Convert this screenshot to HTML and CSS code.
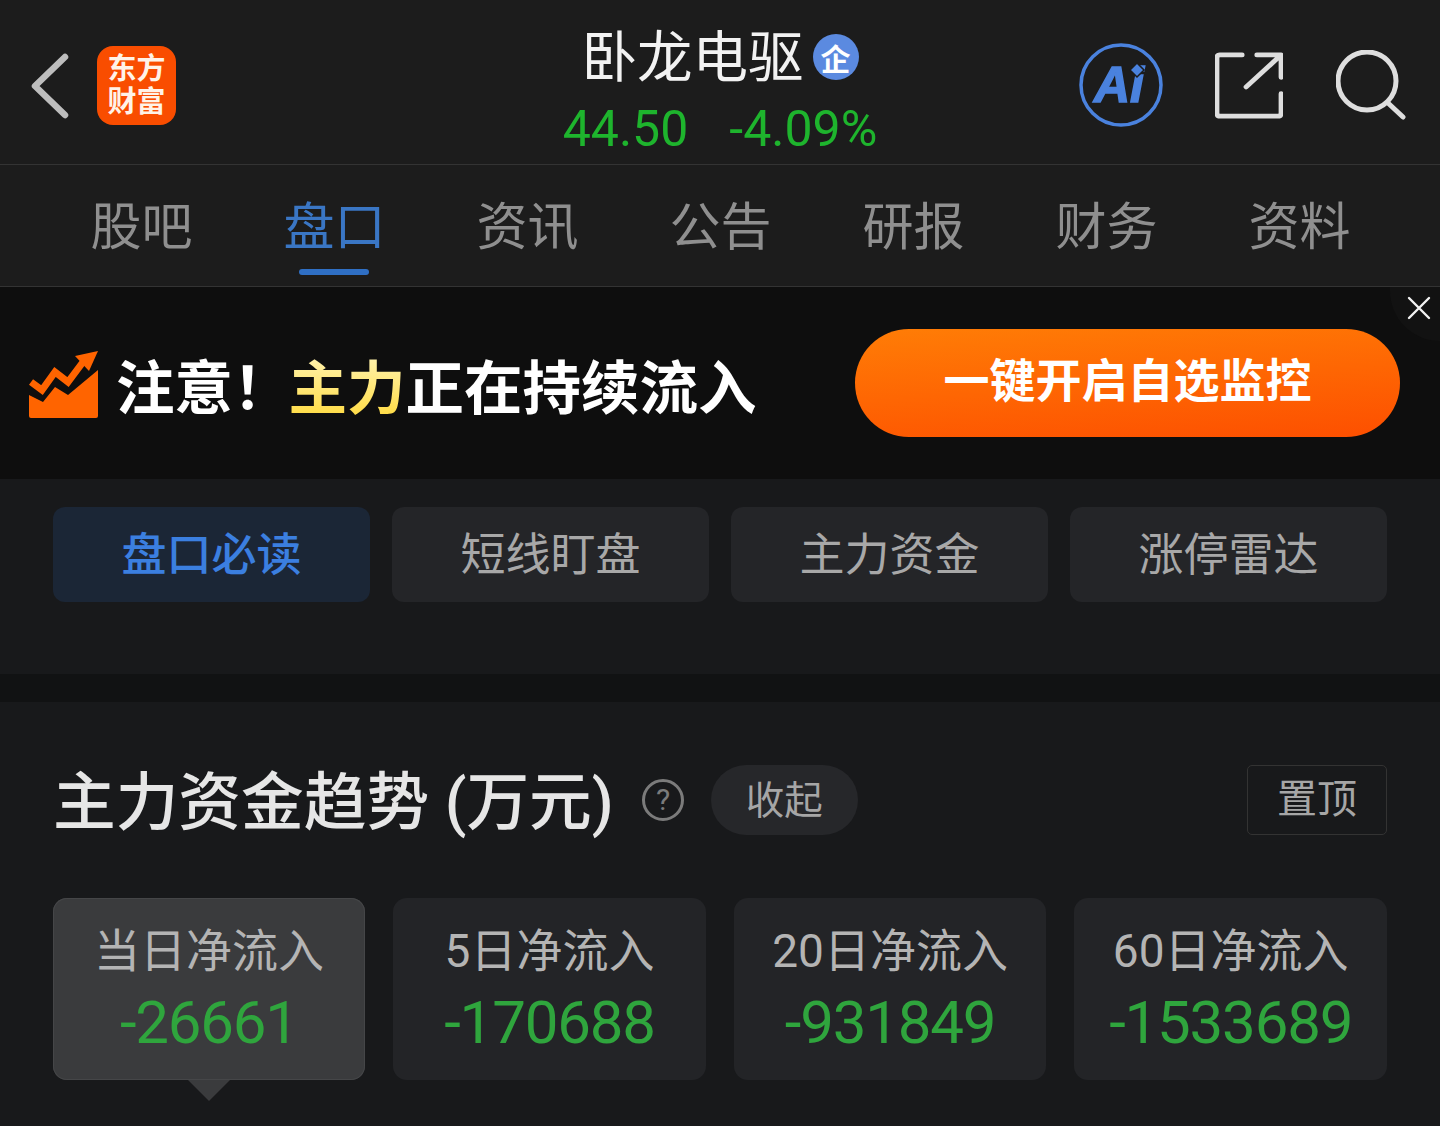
FILE: index.html
```html
<!DOCTYPE html>
<html lang="zh-CN">
<head>
    <meta charset="UTF-8">
    <meta name="viewport" content="width=device-width, initial-scale=1.0">
    <title>卧龙电驱</title>
    <link rel="stylesheet" href="styles.css">
</head>
<body>
    <header class="topbar">
        <div class="topbar-left">
            <svg class="back" width="40" height="66" viewBox="0 0 40 66">
                <path d="M35 4 L5 33 L35 62" fill="none" stroke="#bdbdbd" stroke-width="6.5" stroke-linecap="round" stroke-linejoin="round"/>
            </svg>
            <div class="logo"><span>东方</span><span>财富</span></div>
        </div>
        <div class="topbar-center">
            <div class="stock-name">
                <span>卧龙电驱</span>
                <span class="badge">企</span>
            </div>
            <div class="stock-price">
                <span>44.50</span>
                <span>-4.09%</span>
            </div>
        </div>
        <div class="topbar-right">
            <svg class="icon-ai" width="84" height="84" viewBox="0 0 84 84">
                <circle cx="42" cy="42" r="40" fill="none" stroke="#4a82de" stroke-width="3.5"/>
                <text x="15" y="59" class="ai-text">Ai</text>
                <path d="M58 20 L65 27 L58 34 L51 27 Z" fill="#4a82de" stroke="#1c1c1c" stroke-width="1.5"/>
            </svg>
            <svg width="68" height="68" viewBox="0 0 70 70">
                <path d="M28 4 H5 Q2 4 2 7 V64 Q2 67 5 67 H65 Q68 67 68 64 V44" fill="none" stroke="#dedede" stroke-width="5" stroke-linecap="round"/>
                <path d="M43 4 H68 V27 M66 6 L32 37" fill="none" stroke="#dedede" stroke-width="5" stroke-linecap="round" stroke-linejoin="round"/>
            </svg>
            <svg class="icon-search" width="70" height="70" viewBox="0 0 70 70">
                <circle cx="31" cy="31" r="29" fill="none" stroke="#dedede" stroke-width="5"/>
                <path d="M52 53 L67 67" fill="none" stroke="#dedede" stroke-width="5" stroke-linecap="round"/>
            </svg>
        </div>
    </header>

    <nav class="tabs">
        <a>股吧</a>
        <a class="active">盘口</a>
        <a>资讯</a>
        <a>公告</a>
        <a>研报</a>
        <a>财务</a>
        <a>资料</a>
    </nav>

    <section class="banner">
        <svg class="banner-icon" width="70" height="69" viewBox="0 0 70 69">
            <path d="M0 45 L14 52 L26 37 L39 45 L69 20 V66 Q69 68 67 68 H2 Q0 68 0 66 Z" fill="#ff6400"/>
            <path d="M2 32 L13 40 L26 22 L39 32 L54 12" fill="none" stroke="#ff6400" stroke-width="7" stroke-linejoin="miter"/>
            <path d="M69 1 L46 6 L60 21 Z" fill="#ff6400"/>
        </svg>
        <div class="banner-text">注意！<em>主力</em>正在持续流入</div>
        <button class="banner-btn">一键开启自选监控</button>
        <div class="banner-close">
            <svg width="24" height="24" viewBox="0 0 24 24">
                <path d="M2 2 L22 22 M22 2 L2 22" stroke="#f2f2f2" stroke-width="2.4" stroke-linecap="round"/>
            </svg>
        </div>
    </section>

    <section class="subtabs">
        <a class="active">盘口必读</a>
        <a>短线盯盘</a>
        <a>主力资金</a>
        <a>涨停雷达</a>
    </section>

    <section class="funds">
        <div class="funds-head">
            <h2>主力资金趋势 (万元)</h2>
            <svg class="help" width="44" height="44" viewBox="0 0 44 44">
                <circle cx="22" cy="22" r="19.5" fill="none" stroke="#7b7b7b" stroke-width="3"/>
                <text x="22" y="32" class="help-mark">?</text>
            </svg>
            <a class="collapse">收起</a>
            <a class="pin">置顶</a>
        </div>
        <div class="cards">
            <div class="card active">
                <div class="card-label">当日净流入</div>
                <div class="card-value">-26661</div>
            </div>
            <div class="card">
                <div class="card-label">5日净流入</div>
                <div class="card-value">-170688</div>
            </div>
            <div class="card">
                <div class="card-label">20日净流入</div>
                <div class="card-value">-931849</div>
            </div>
            <div class="card">
                <div class="card-label">60日净流入</div>
                <div class="card-value">-1533689</div>
            </div>
        </div>
    </section>
</body>
</html>
```

FILE: styles.css
```css
* {
    box-sizing: border-box;
}
html, body {
    height: 100%;
}
body {
    margin: 0;
    background: #18191b;
    font-family: Roboto, "Noto Sans CJK SC", sans-serif;
    overflow: hidden;
}

/* top bar */
.topbar {
    height: 165px;
    background: #1c1c1c;
    border-bottom: 1px solid #333;
    display: grid;
    grid-template-columns: 1fr auto 1fr;
    align-items: start;
}
.topbar-left {
    display: flex;
    align-items: center;
    padding: 46px 0 0 30px;
}
.back {
    margin-right: 27px;
}
.logo {
    width: 79px;
    height: 79px;
    border-radius: 16px;
    background: #f94d00;
    color: #fff3e8;
    font-size: 29px;
    font-weight: 700;
    line-height: 33px;
    display: flex;
    flex-direction: column;
    align-items: center;
    justify-content: center;
}
.topbar-center {
    padding-top: 18px;
    display: flex;
    flex-direction: column;
    align-items: center;
}
.stock-name {
    display: flex;
    align-items: center;
    gap: 9px;
    height: 70px;
    margin-bottom: 4px;
    color: #f2f2f2;
    font-size: 55.5px;
}
.badge {
    width: 46px;
    height: 46px;
    margin-top: 8px;
    border-radius: 50%;
    background: #5b8ae0;
    color: #fff;
    font-size: 30px;
    font-weight: 700;
    display: flex;
    align-items: center;
    justify-content: center;
}
.stock-price {
    display: flex;
    gap: 41px;
    color: #1eb42d;
    font-size: 50px;
    line-height: 74px;
}
.topbar-right {
    display: flex;
    align-items: center;
    justify-content: flex-end;
    gap: 52px;
    padding: 43px 34px 0 0;
}
.icon-search {
    margin-left: 1px;
}
.ai-text {
    font-family: "Liberation Sans", sans-serif;
    font-size: 50px;
    font-weight: 700;
    font-style: italic;
    fill: #4a82de;
    stroke: #4a82de;
    stroke-width: 1.5px;
}

/* main tabs */
.tabs {
    height: 122px;
    background: #1c1c1c;
    border-bottom: 1px solid #333;
    padding: 0 45px;
    display: grid;
    grid-template-columns: repeat(7, 193px);
}
.tabs a {
    position: relative;
    height: 121px;
    padding-top: 6px;
    text-align: center;
    color: #8f8f8f;
    font-size: 51px;
    line-height: 114px;
}
.tabs a.active {
    color: #3a76c4;
}
.tabs a.active::after {
    content: "";
    position: absolute;
    left: 61px;
    bottom: 11px;
    width: 70px;
    height: 6px;
    border-radius: 3px;
    background: #2f6fc4;
}

/* promo banner */
.banner {
    position: relative;
    height: 192px;
    background: #0e0e0e;
    display: flex;
    align-items: center;
    padding: 0 40px 0 29px;
}
.banner-icon {
    margin-top: 2px;
}
.banner-text {
    margin-left: 17px;
    color: #fff;
    font-size: 58.5px;
    font-weight: 700;
    white-space: nowrap;
}
.banner-text em {
    margin-left: -3px;
    font-style: normal;
    background: linear-gradient(#fff3b0, #ffd93a);
    -webkit-background-clip: text;
    background-clip: text;
    color: transparent;
}
.banner-btn {
    margin-left: auto;
    width: 545px;
    height: 108px;
    border: 0;
    border-radius: 54px;
    background: linear-gradient(176deg, #ff7d06, #fd4f00);
    color: #fff;
    font-family: inherit;
    font-size: 46px;
    font-weight: 700;
    padding-bottom: 14px;
}
.banner-close {
    position: absolute;
    top: 0;
    right: 0;
    width: 50px;
    height: 54px;
    border-bottom-left-radius: 50px;
    background: #121212;
    display: flex;
    align-items: center;
    justify-content: center;
    padding: 0 0 12px 8px;
}

/* sub tabs */
.subtabs {
    height: 223px;
    background: #18191b;
    border-bottom: 28px solid #111213;
    padding: 28px 53px 0;
    display: grid;
    grid-template-columns: repeat(4, 317px);
    grid-template-rows: 95px;
    column-gap: 22px;
}
.subtabs a {
    border-radius: 12px;
    background: #242528;
    color: #a8a8a8;
    font-size: 45px;
    line-height: 98px;
    text-align: center;
}
.subtabs a.active {
    background: #1b2636;
    color: #3b7fe0;
    font-weight: 500;
}

/* fund trend */
.funds {
    padding: 63px 53px 0;
}
.funds-head {
    display: flex;
    align-items: center;
    height: 70px;
}
.funds-head h2 {
    margin: 0 0 8px 0;
    color: #e6e6e6;
    font-size: 62.7px;
    font-weight: 500;
    white-space: nowrap;
}
.help {
    margin-left: 27px;
}
.help-mark {
    font-family: Roboto, sans-serif;
    font-size: 30px;
    text-anchor: middle;
    fill: #7b7b7b;
}
.collapse {
    margin-left: 26px;
    width: 147px;
    height: 70px;
    border-radius: 35px;
    background: #26272a;
    color: #a6a6a6;
    font-size: 38.5px;
    line-height: 72px;
    text-align: center;
}
.pin {
    margin-left: auto;
    width: 140px;
    height: 70px;
    border: 1px solid #333;
    border-radius: 5px;
    color: #a6a6a6;
    font-size: 40px;
    line-height: 68px;
    text-align: center;
}
.cards {
    margin: 63px 0 0 -0.4px;
    display: grid;
    grid-template-columns: repeat(4, 1fr);
    column-gap: 28px;
}
.card {
    position: relative;
    height: 182px;
    border-radius: 14px;
    background: #232427;
    text-align: center;
    padding-top: 24px;
}
.card.active {
    background: #3a3b3d;
    box-shadow: inset 0 0 0 1px #454648;
}
.card.active::after {
    content: "";
    position: absolute;
    left: 135px;
    bottom: -21px;
    width: 0;
    height: 0;
    border-left: 21px solid transparent;
    border-right: 21px solid transparent;
    border-top: 21px solid #3a3b3d;
}
.card-label {
    color: #b4b4b4;
    font-size: 46px;
    line-height: 59px;
}
.card-value {
    color: #2fa53d;
    font-size: 60px;
    line-height: 84px;
    letter-spacing: -1.2px;
}
```
